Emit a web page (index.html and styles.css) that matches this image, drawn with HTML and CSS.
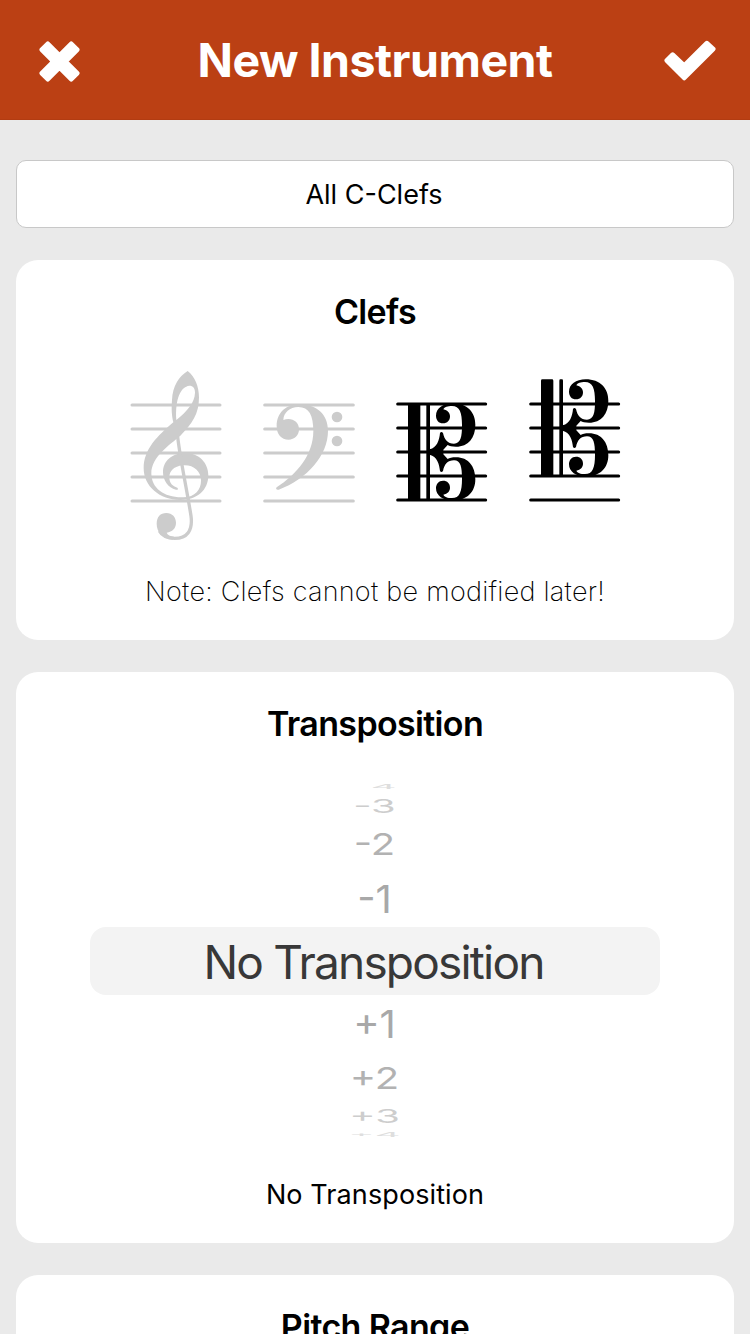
FILE: index.html
```html
<!DOCTYPE html>
<html lang="en">
<head>
    <meta charset="UTF-8">
    <meta name="viewport" content="width=device-width, initial-scale=1.0">
    <title>New Instrument</title>
    <link rel="stylesheet" href="styles.css">
</head>
<body>

    <header class="navbar">
        <svg class="icon-close" viewBox="0 0 42 42" width="41" height="41">
            <path d="M9 9L33 33M33 9L9 33"/>
            <path class="corners" d="M9 3L3 9L33 39L39 33ZM33 3L39 9L9 39L3 33Z"/>
        </svg>
        <h1>New Instrument</h1>
        <svg class="icon-check" viewBox="0 0 54 42" width="52" height="41">
            <path d="M9 15L3 21L21 39L51 9L44.500 3L21 26.500Z"/>
        </svg>
    </header>

    <main class="content">
        <div class="name-field">All C-Clefs</div>

        <section class="card">
            <h2>Clefs</h2>
            <div class="clefs">
                <!-- treble -->
                <svg class="clef" viewBox="-33 0 399 570">
                    <path class="staff" d="M36 135H300M36 207H300M36 279H300M36 351H300M36 423H300"/>
                    <path fill-rule="evenodd" d="M203 33C225 50 237 80 237 112C237 162 216 192 181 227C150 254 94 290 94 340C94 386 134 414 190 412C226 411 243 388 243 362C243 332 219 313 188 316C162 319 148 333 148 352C148 370 158 379 172 383C176 387 173 391 168 389C144 384 129 361 129 337C129 303 156 279 195 279C238 279 265 309 265 346C265 391 231 420 181 420C119 420 71 379 71 325C71 268 113 227 160 187C155 166 154 147 156 120C158 78 177 49 203 33ZM208 77C182 80 165 116 169 180C202 153 224 128 225 98C225 84 219 77 208 77Z"/>
                    <path class="stem" d="M173 230C181 302 199 378 213 468C219 512 201 535 164 535C143 535 126 527 118 513"/>
                    <path d="M139 459C157 459 168 472 168 488C168 505 157 515 140 518C142 525 151 529 162 530L158 539C126 536 110 515 110 491C110 471 121 459 139 459Z"/>
                </svg>
                <!-- bass -->
                <svg class="clef" viewBox="-24 0 399 570">
                    <path class="staff" d="M44 135H310M44 207H310M44 279H310M44 351H310M44 423H310"/>
                    <path d="M80 382C140 343 190 285 190 213C190 166 177 141 145 141C119 141 101 158 100 180C125 171 147 185 147 208C147 227 133 239 116 239C94 239 80 223 80 198C80 158 108 133 150 133C201 133 234 165 234 212C234 286 171 357 86 389C80 391 76 386 80 382Z"/>
                    <circle cx="261" cy="171" r="16"/>
                    <circle cx="261" cy="243" r="16"/>
                </svg>
                <!-- alto -->
                <svg class="clef active" viewBox="-30 0 399 570">
                    <path class="staff" d="M38 132H302M38 204H302M38 276H302M38 348H302M38 420H302"/>
                    <g id="c-clef">
                        <path d="M73 130H102Q106 130 106 134V418Q106 422 102 422H73Q69 422 69 418V134Q69 130 73 130ZM127 130H132Q135 130 135 134V418Q135 422 132 422H127Q124 422 124 418V134Q124 130 127 130Z"/>
                        <path id="c-half" d="M134 276V268C156 263 163 240 165 219Q169 213 174 219C178 239 188 251 207 251C227 251 231 231 231 196C231 157 224 138 201 138C188 138 178 141 175 148C188 151 195 159 195 169C195 182 187 190 174 190C161 190 153 180 153 167C153 145 174 130 203 130C247 130 271 157 271 194C271 233 250 260 213 260C201 260 193 258 188 255L175 269V276Z"/>
                        <use href="#c-half" transform="matrix(1 0 0 -1 0 552)"/>
                    </g>
                </svg>
                <!-- tenor -->
                <svg class="clef active" viewBox="-21 0 399 570">
                    <path class="staff" d="M47 132H311M47 204H311M47 276H311M47 348H311M47 420H311"/>
                    <use href="#c-clef" x="9" y="-72"/>
                </svg>
            </div>
            <p class="note">Note: Clefs cannot be modified later!</p>
        </section>

        <section class="card">
            <h2>Transposition</h2>
            <div class="wheel">
                <div class="row up4"><span><i>-</i>4</span></div>
                <div class="row up3"><span>-3</span></div>
                <div class="row up2"><span>-2</span></div>
                <div class="row up1"><span>-1</span></div>
                <div class="row selected"><span>No Transposition</span></div>
                <div class="row down1"><span>+1</span></div>
                <div class="row down2"><span>+2</span></div>
                <div class="row down3"><span>+3</span></div>
                <div class="row down4"><span>+4</span></div>
            </div>
            <p class="value">No Transposition</p>
        </section>

        <section class="card">
            <h2>Pitch Range</h2>
        </section>
    </main>

</body>
</html>
```
FILE: styles.css
```css
* {
    box-sizing: border-box;
}

body {
    margin: 0;
    height: 1334px;
    overflow: hidden;
    background-color: #eaeaea;
    color: #000;
    font-family: Inter, 'Liberation Sans', sans-serif;
}

h1, h2, p {
    margin: 0;
}

.navbar {
    display: grid;
    grid-template-columns: 52px 1fr 52px;
    align-items: center;
    height: 120px;
    padding: 2px 34px 0 39px;
    background-color: #bb4014;
    border-bottom: 1px solid #b23c12;
    color: #fff;
}

.navbar h1 {
    padding: 0 5px 2px 0;
    font-size: 46.5px;
    line-height: 56px;
    font-weight: 700;
    letter-spacing: -0.5px;
    text-align: center;
    white-space: nowrap;
}

.icon-close {
    margin-top: 1px;
}

.icon-close path {
    stroke: #fff;
    stroke-width: 12;
}

.icon-close .corners,
.icon-check path {
    fill: #fff;
    stroke: #fff;
    stroke-width: 5;
    stroke-linejoin: round;
}

.content {
    display: flex;
    flex-direction: column;
    gap: 32px;
    padding: 40px 16px 0;
}

.name-field {
    height: 68px;
    padding-right: 2px;
    border: 1px solid #c8c8c8;
    border-radius: 10px;
    background-color: #fff;
    font-size: 27px;
    line-height: 67px;
    text-align: center;
}

.card {
    padding: 32px 0 29px;
    border-radius: 22px;
    background-color: #fff;
    text-align: center;
}

.card h2 {
    font-size: 34px;
    line-height: 40px;
    font-weight: 600;
    letter-spacing: -0.65px;
}

.clefs {
    display: flex;
    justify-content: center;
    margin-top: 28px;
}

.clef {
    width: 133px;
    height: 190px;
    fill: #ccc;
    stroke: none;
    color: #ccc;
}

.clef.active {
    fill: #000;
    color: #000;
}

.staff {
    stroke: currentColor;
    stroke-width: 9;
    stroke-linecap: round;
}

.stem {
    fill: none;
    stroke: currentColor;
    stroke-width: 10;
}

.note {
    margin-top: 21px;
    margin-bottom: -1px;
    font-size: 27px;
    line-height: 41px;
    font-weight: 200;
    letter-spacing: 0.25px;
}

/* picker wheel, rows get flatter towards the ends */
.wheel {
    width: 570px;
    margin: 36px auto 0;
}

.row {
    display: flex;
    align-items: center;
    justify-content: center;
    padding-right: 1px;
    color: #a8a8a8;
    font-size: 40px;
    line-height: 0;
}

.row i {
    visibility: hidden;
}

.up4 { height: 14px; color: #dedede; }
.up3 { height: 24px; color: #cdcdcd; }
.up2 { height: 52px; color: #b2b2b2; }
.up1 { height: 57px; }
.down1 { height: 58px; }
.down2 { height: 50px; color: #b2b2b2; }
.down3 { height: 26px; color: #cdcdcd; }
.down4 { height: 12px; color: #dedede; }

.up1 span, .down1 span { transform: scaleY(0.97); }
.up2 span, .down2 span { transform: scaleY(0.76); }
.up3 span, .down3 span { transform: scaleY(0.48); }
.up4 span, .down4 span { transform: scaleY(0.14); }

.selected {
    height: 68px;
    padding: 1px 3px 0 0;
    border-radius: 16px;
    background-color: #f3f3f3;
    color: #383838;
    font-size: 46px;
    letter-spacing: -1.8px;
}

.value {
    margin-top: 34px;
    margin-bottom: -1px;
    font-size: 27px;
    line-height: 40px;
    letter-spacing: 0.1px;
}
```
